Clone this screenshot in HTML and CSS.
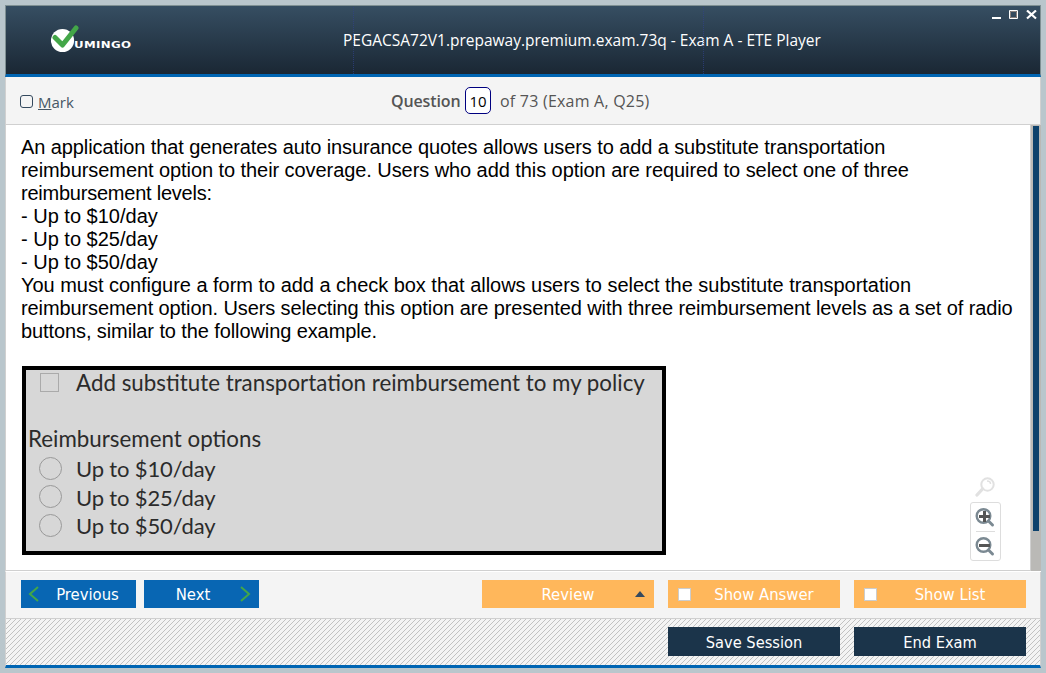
FILE: index.html
```html
<!DOCTYPE html>
<html lang="en">
<head>
<meta charset="utf-8">
<title>ETE Player</title>
<link rel="stylesheet" href="styles.css">
</head>
<body>
<div class="window">
  <header class="titlebar">
    <div class="logo">
      <svg class="logo-mark" width="30" height="28" viewBox="0 0 30 28"><circle cx="11.500" cy="15.500" r="11.600" fill="#fff"/><path d="M4 12.500L11.500 20L25 3" fill="none" stroke="#43a648" stroke-width="5" stroke-linecap="round" stroke-linejoin="round"/></svg>
      <span class="logo-text">UMINGO</span>
    </div>
    <h1 class="title">PEGACSA72V1.prepaway.premium.exam.73q - Exam A - ETE Player</h1>
    <div class="controls">
      <svg width="46" height="12" viewBox="0 0 46 12"><path d="M0 7h9v2H0z" fill="#fff"/><path d="M17.500 .5h8v8h-8z" fill="none" stroke="#fff"/><path d="M18.500 1.500h6v6h-6z" fill="none" stroke="#8b817d"/><path d="M35 .5l9 8M44 .5l-9 8" stroke="#fff" stroke-width="2.200"/></svg>
    </div>
  </header>
  <div class="question-bar">
    <label class="mark"><span class="mark-box"></span><span><u>M</u>ark</span></label>
    <div class="counter"><b>Question</b><span class="number">10</span><span class="total">of 73 (Exam A, Q25)</span></div>
  </div>
  <main class="content">
    <div class="page">
      <p class="question">
        <span class="tight-2">An application that generates auto insurance quotes allows users to add a substitute transportation</span>
        <span class="tight-1">reimbursement option to their coverage. Users who add this option are required to select one of three</span>
        <span class="tight-3">reimbursement levels:</span>
        <span>- Up to $10/day</span>
        <span>- Up to $25/day</span>
        <span>- Up to $50/day</span>
        <span class="tight-0">You must configure a form to add a check box that allows users to select the substitute transportation</span>
        <span class="tight-2">reimbursement option. Users selecting this option are presented with three reimbursement levels as a set of radio</span>
        <span class="tight-2">buttons, similar to the following example.</span>
      </p>
      <section class="example">
        <div class="row policy"><i class="square"></i><span>Add substitute transportation reimbursement to my policy</span></div>
        <div class="options-title">Reimbursement options</div>
        <div class="row option"><i class="radio"></i><span>Up to $10/day</span></div>
        <div class="row option"><i class="radio"></i><span>Up to $25/day</span></div>
        <div class="row option"><i class="radio"></i><span>Up to $50/day</span></div>
      </section>
      <div class="zoom-tools">
        <svg width="20" height="20" viewBox="0 0 20 20" fill="none" stroke="#e1e1e1"><circle cx="12.500" cy="7.500" r="6.200" stroke-width="2"/><path d="M7.500 12L2 18" stroke-width="3.300" stroke-linecap="round"/><path d="M12 4c2 0 3.500 1 3.500 3" stroke-width="1.500"/></svg>
        <div class="zoom-box">
          <svg width="20" height="20" viewBox="0 0 20 20" fill="none"><circle cx="8.500" cy="8" r="6.800" stroke="#7b8992" stroke-width="2.400"/><path d="M13.500 13l4 4" stroke="#7b8992" stroke-width="3" stroke-linecap="round"/><path d="M4 8.500h11M9.500 3v11" stroke="#555" stroke-width="3"/></svg>
          <svg width="20" height="20" viewBox="0 0 20 20" fill="none"><circle cx="8.500" cy="8" r="6.800" stroke="#7b8992" stroke-width="2.400"/><path d="M13.500 13l4 4" stroke="#7b8992" stroke-width="3" stroke-linecap="round"/><path d="M4 8.500h11" stroke="#555" stroke-width="3"/></svg>
        </div>
      </div>
    </div>
    <div class="scrollbar"><div class="thumb"></div></div>
  </main>
  <nav class="nav-bar">
    <button class="btn blue"><svg width="12" height="18" viewBox="0 0 12 18"><path d="M10 2L2 9l8 7" fill="none" stroke="#43a648" stroke-width="2"/></svg><span class="label">Previous</span></button>
    <button class="btn blue next"><span class="label">Next</span><svg width="12" height="18" viewBox="0 0 12 18"><path d="M2 2l8 7-8 7" fill="none" stroke="#43a648" stroke-width="2"/></svg></button>
    <span class="spacer"></span>
    <button class="btn orange review"><span class="label">Review</span><svg width="10" height="6" viewBox="0 0 10 6"><path d="M0 6L5 0l5 6z" fill="#34495e"/></svg></button>
    <button class="btn orange"><i class="check"></i><span class="label">Show Answer</span></button>
    <button class="btn orange"><i class="check"></i><span class="label">Show List</span></button>
  </nav>
  <footer class="session-bar">
    <svg class="hatch" width="1034" height="46" shape-rendering="crispEdges"><defs><pattern id="hatch" width="5" height="5" patternUnits="userSpaceOnUse"><path d="M4 0h1v1h-1zM3 1h1v1h-1zM2 2h1v1h-1zM1 3h1v1h-1zM0 4h1v1h-1z" fill="#c2c2c2"/></pattern></defs><rect width="1034" height="46" fill="url(#hatch)"/></svg>
    <button class="btn dark">Save Session</button>
    <button class="btn dark">End Exam</button>
  </footer>
</div>
</body>
</html>
```
FILE: styles.css
```css
* { box-sizing: border-box; }
body { margin: 0; width: 1046px; height: 673px; padding: 5px; background: #b9c6cc; overflow: hidden; font-family: "Open Sans", sans-serif; }
.window { width: 1036px; height: 663px; display: flex; flex-direction: column; background: #f4f4f4; }
.titlebar { height: 72px; border: 1px solid #7f9093; border-bottom: 3px solid #0065b3; background: linear-gradient(#364e62, #1a2734); display: grid; grid-template-columns: 337px 1fr 48px; position: relative; }
.titlebar::before { content: ""; position: absolute; left: 347px; width: 349px; top: 1px; bottom: 0; border: dotted #30428a; border-width: 0 1px; opacity: .7; }
.logo { display: flex; padding: 19px 0 0 45px; }
.logo-mark { flex: none; }
.logo-text { margin: 13px 0 0 -7px; font: bold 9.500px/14px "DejaVu Sans", sans-serif; letter-spacing: .3px; color: #fff; position: relative; transform: scaleX(1.24); transform-origin: 0 50%; }
.title { margin: 0; padding-top: 23px; font-size: 15.500px; font-weight: 400; line-height: 22px; color: #fff; white-space: nowrap; }
.controls { padding-top: 4px; }
.controls svg { display: block; }
.question-bar { height: 48px; border: 1px solid #d0d0d0; border-top: 0; display: flex; align-items: center; color: #555; font-size: 16px; white-space: nowrap; }
.mark { width: 385px; padding: 3px 0 0 14px; display: flex; align-items: center; gap: 5px; color: #465765; font-size: 15px; }
.mark-box { width: 13px; height: 13px; border: 1px solid #34495e; border-radius: 3px; margin-top: -2px; }
.counter { display: flex; align-items: center; }
.counter b { font-weight: 600; width: 74px; letter-spacing: -.12px; }
.number { width: 26px; height: 27px; border: 1px solid #000080; border-radius: 5px; background: #fff; color: #000; text-align: center; font-size: 15px; line-height: 27px; }
.total { margin-left: 9px; letter-spacing: .22px; }
.content { height: 447px; display: flex; background: #fff; border-left: 1px solid #d0d0d0; border-bottom: 1px solid #fff; }
.page { flex: 1; position: relative; border-right: 1px solid #d0d0d0; border-bottom: 1px solid #d0d0d0; padding: 11px 0 0 15px; }
.question { margin: 0; display: flex; flex-direction: column; font: 20px/23px "Liberation Sans", Arial, sans-serif; color: #000; white-space: nowrap; }
.tight-0 { letter-spacing: -.03px; }
.tight-1 { letter-spacing: -.07px; }
.tight-2 { letter-spacing: -.098px; }
.tight-3 { letter-spacing: -.23px; }
.example { margin: 23px 0 0 1px; width: 644px; height: 189px; border: 4px solid #000; background: #d7d7d7; color: #2b2b2b; font: 22px/28px Lato, sans-serif; white-space: nowrap; }
.row { display: flex; align-items: center; }
.policy { height: 25px; padding-left: 14px; gap: 17px; font-size: 22.350px; }
.square { width: 19px; height: 19px; border: 1px solid #aaa; }
.options-title { margin: 30px 0 0 2px; height: 30px; font-size: 22.350px; }
.option { height: 28.500px; padding-left: 13px; gap: 14px; }
.option span { letter-spacing: -.15px; }
.option .radio { margin-top: -2px; }
.radio { width: 23px; height: 23px; border: 1px solid #999; border-radius: 50%; }
.zoom-tools { position: absolute; left: 964px; top: 352px; width: 31px; display: flex; flex-direction: column; align-items: center; gap: 5px; }
.zoom-tools > svg { margin-right: 2px; }
.zoom-box { width: 31px; height: 59px; border: 1px solid #ddd; border-radius: 3px; background: #fff linear-gradient(#ddd, #ddd) 5px 28px / 19px 1px no-repeat; padding: 5px 4px; display: flex; flex-direction: column; gap: 9px; }
.zoom-box svg { flex: none; }
.scrollbar { width: 10px; background: #bab9b6; padding: 1px 2px 0 2px; }
.thumb { height: 405px; background: #0c416c; width: 6px; }
.nav-bar { height: 47px; display: flex; padding: 8px 14px 0 15px; border: 1px solid #d0d0d0; border-top: 0; }
.btn { border: 0; padding: 0; height: 28px; width: 172px; display: flex; align-items: center; justify-content: center; color: #fff; font: 16.500px/28px "DejaVu Sans Condensed", "DejaVu Sans", sans-serif; font-stretch: condensed; white-space: nowrap; }
.btn .label { padding-top: 2px; }
.blue { width: 115px; margin-right: 8px; background: #0866b3; padding: 0 1px 0 7px; }
.blue.next { padding: 0 8px 0 3px; }
.blue .label { flex: 1; }
.orange { background: #ffb75b; margin-left: 14px; padding: 0 3px 0 10px; }
.orange.review { padding: 0 9px 0 10px; }
.review .label { padding-left: 9px; }
.orange .label { flex: 1; }
.spacer { flex: 1; }
.check { width: 13px; height: 13px; border: 1px solid #ccc; background: #fff; }
.session-bar { position: relative; height: 49px; display: flex; justify-content: flex-end; gap: 14px; padding: 8px 14px 0 0; border: 1px solid #d0d0d0; border-top: 0; border-bottom: 3px solid #0065b3; }
.hatch { position: absolute; left: 0; top: 0; }
.dark { position: relative; height: 29px; background: #1b344a; padding-top: 2px; font-size: 16.300px; }
```
